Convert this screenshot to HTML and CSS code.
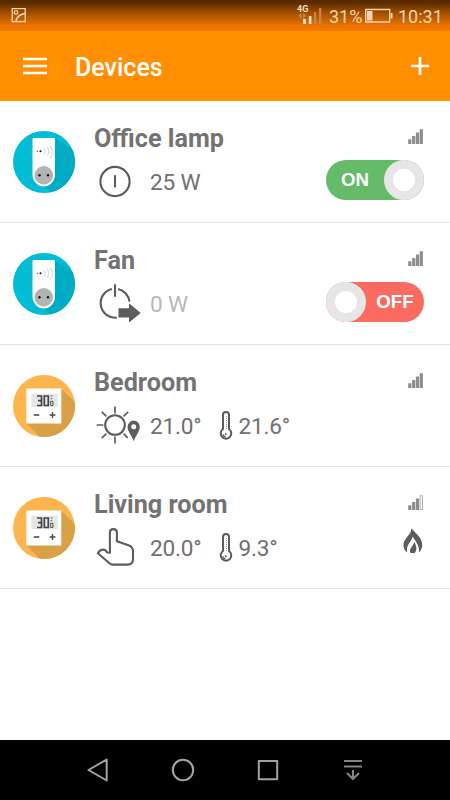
FILE: index.html
```html
<!DOCTYPE html>
<html lang="en">
<head>
<meta charset="utf-8">
<title>Devices</title>
<link rel="stylesheet" href="styles.css">
</head>
<body>
<svg class="defs" aria-hidden="true">
  <defs>
    <clipPath id="disc"><circle cx="31" cy="31" r="31"/></clipPath>
    <symbol id="plug" viewBox="0 0 62 62">
      <g clip-path="url(#disc)">
        <path fill="#00bcd4" d="M0 0h62v62H0z"/>
        <path fill="#00acc4" d="M41.5 7L62 20v42H38L28 53z"/>
        <path fill="#fff" d="M19.5 8Q19.5 7 21 7H40.5Q42 7 42 8V43.500a11.250 12 0 0 1-22.500 0z"/>
        <circle cx="30.800" cy="44.200" r="9.200" fill="#b3b3b3"/>
        <g fill="#111"><circle cx="26.500" cy="44.200" r="1.200"/><circle cx="35" cy="44.200" r="1.200"/><circle cx="24.300" cy="20.300" r=".6"/><circle cx="27.500" cy="20.300" r="1"/></g>
        <path fill="none" stroke="#d2d2d2" stroke-width="1" d="M31.500 17.500q2 3 0 6M34.500 16q3 4.500 0 9M37 14.500q4.800 7 0 13"/>
      </g>
    </symbol>
    <symbol id="thermostat" viewBox="0 0 62 62">
      <g clip-path="url(#disc)">
        <path fill="#ffb54d" d="M0 0h62v62H0z"/>
        <path fill="#d9a047" d="M48.500 14L68 33v33H31L13.500 48.500z"/>
        <path fill="#fff" d="M13.300 13.500h35v35h-35z"/>
        <path fill="#e6e6e6" d="M18.300 18.700h26.500v13.300h-26.500z"/>
        <g fill="none" stroke="#444" stroke-width="1.700">
          <path d="M24 21h4.500v9.500h-4.500M25 25.700h3.500M31.300 20.300v10.400M31 21h4.300v9.500H31M35.300 20.300v10.400"/>
          <path stroke-width=".9" d="M37.700 21h1.700M37.700 26.300h2.300v4.200h-2.300zM37.700 23.700h1.500"/>
          <path stroke-width="1.300" d="M20.700 40h5.600M36.600 40h5.800M39.500 37.100v5.800"/>
        </g>
      </g>
    </symbol>
    <symbol id="thermometer" viewBox="0 0 14 30">
      <path fill="#fff" stroke="#595b5c" stroke-width="2" d="M4 18V4a3 3 0 0 1 6 0V18a5.300 5.300 0 1 1-6 0z"/>
      <path fill="none" stroke="#999" stroke-width="1" stroke-dasharray="1 1" d="M7.500 5V18"/>
      <path fill="none" stroke="#555" stroke-width="1.300" d="M3.800 23.300q.5 2 2.700 2.500M6 22.500l1.500 1.500"/>
    </symbol>
    <symbol id="signal" viewBox="0 0 16 15">
      <path fill="#8d8d8d" d="M.2 10.300h3.200V15H.2zM4.100 7.100h3.200V15H4.100zM7.900 3.600h3.200V15H7.900zM11.700 .2h3.200v14.800h-3.200z"/>
    </symbol>
  </defs>
</svg>

<div class="statusbar">
  <svg class="sb-picture" viewBox="0 0 16 16"><g fill="none" stroke="currentColor" stroke-width="1.300"><path d="M1.200 1.700h13v13h-13z"/><circle cx="5" cy="5.500" r="1.800"/><path d="M5 14q1-6 9-7.500" stroke-width="1.700"/></g></svg>
  <div class="sb-right">
    <svg class="sb-net" viewBox="0 0 26 22"><text x="0" y="9">4G</text><path fill="#f3dcc7" d="M6 16h3v5H6zM11.800 13h2.700v8h-2.700z"/><path fill="#c8874a" d="M17 9h2.200v12H17zM22 5h2.300v16H22zM1.300 12.800l3-3v6zM9 12.800l-3-3v6z"/></svg>
    <span class="sb-pct">31%</span>
    <svg class="sb-bat" viewBox="0 0 29 16"><path fill="none" stroke="currentColor" stroke-width="1.400" d="M1.700 1.500h24v12.500h-24z"/><path fill="currentColor" d="M3 3h5.500v9.500H3zM26.500 5h2v5.500h-2z"/></svg>
    <span class="sb-time">10:31</span>
  </div>
</div>

<header class="appbar">
  <svg class="menu" viewBox="0 0 24 18"><path stroke="#fff" stroke-width="2.600" d="M0 2h24M0 9h24M0 16h24"/></svg>
  <h1>Devices</h1>
  <svg class="add" viewBox="0 0 18 18"><path stroke="#fff" stroke-width="2.700" d="M0 9h18M9 0v18"/></svg>
</header>

<main class="devices">
  <section class="device">
    <svg class="avatar"><use href="#plug"/></svg>
    <div class="info">
      <h2>Office lamp</h2>
      <div class="readings">
        <svg class="mode" viewBox="0 0 50 46"><g fill="none" stroke="#595b5c" stroke-width="2.100"><circle cx="21" cy="22.500" r="14.600"/><path d="M21 16.200v12.200"/></g></svg>
        <span class="value">25 W</span>
      </div>
    </div>
    <div class="side">
      <svg class="signal"><use href="#signal"/></svg>
      <div class="toggle on"><span>ON</span><i></i></div>
    </div>
  </section>

  <section class="device">
    <svg class="avatar"><use href="#plug"/></svg>
    <div class="info">
      <h2>Fan</h2>
      <div class="readings">
        <svg class="mode" viewBox="0 0 50 46"><path fill="none" stroke="#595b5c" stroke-width="2.100" d="M21 3.300V15.800M17.800 8A14.600 14.600 0 0 0 22.800 36.700M24 8A14.600 14.600 0 0 1 35.500 20.600"/><path fill="#5b5d5e" d="M24.500 27.300H35V22.300L46.700 31.900 35 41.500V36.500H24.500z"/></svg>
        <span class="value idle">0 W</span>
      </div>
    </div>
    <div class="side">
      <svg class="signal"><use href="#signal"/></svg>
      <div class="toggle off"><i></i><span>OFF</span></div>
    </div>
  </section>

  <section class="device">
    <svg class="avatar"><use href="#thermostat"/></svg>
    <div class="info">
      <h2>Bedroom</h2>
      <div class="readings">
        <svg class="mode" viewBox="0 0 50 46"><g fill="none" stroke="#5b5d5e" stroke-width="1.700"><circle cx="21" cy="22" r="9.800" stroke-width="2.100"/><path d="M21 3.500v7M21 33.500v7M2.700 22h6.600M7.800 8.800l4.600 4.600M34.200 8.800l-4.600 4.600M7.800 35.200l4.600-4.600M33.800 34.800l-4.200-4.200"/></g><path fill="#5b5d5e" fill-rule="evenodd" d="M39.700 38.300C37.500 32 33.600 28.500 33.600 23.700a6.100 6.100 0 0 1 12.200 0C45.800 28.500 41.900 32 39.700 38.300zM39.700 21.200a2.500 2.500 0 1 0 0 5 2.500 2.500 0 0 0 0-5z"/></svg>
        <span class="value">21.0°</span>
        <svg class="thermo"><use href="#thermometer"/></svg>
        <span class="value">21.6°</span>
      </div>
    </div>
    <div class="side">
      <svg class="signal"><use href="#signal"/></svg>
    </div>
  </section>

  <section class="device">
    <svg class="avatar"><use href="#thermostat"/></svg>
    <div class="info">
      <h2>Living room</h2>
      <div class="readings">
        <svg class="mode" viewBox="0 0 50 46"><path fill="none" stroke="#5b5d5e" stroke-width="2.100" stroke-linejoin="round" d="M15.900 27.800V7.700C15.900 2.900 22.900 2.900 22.900 7.700V16.300L34.500 20.200Q39 21.800 39 26V34Q39 39.600 33.500 39.600H19Q17 39.600 15.500 38.200L3.800 28.300C5.500 25.500 8.500 24.200 11 25L13.300 27.500z"/></svg>
        <span class="value">20.0°</span>
        <svg class="thermo"><use href="#thermometer"/></svg>
        <span class="value">9.3°</span>
      </div>
    </div>
    <div class="side">
      <svg class="signal" viewBox="0 0 16 15"><path fill="#8d8d8d" d="M.2 10.300h3.200V15H.2zM4.100 7.100h3.200V15H4.100zM7.900 3.600h3.200V15H7.900z"/><path fill="#fff" stroke="#999" stroke-width=".8" d="M12.200 .7h2.300v13.800h-2.300z"/></svg>
      <svg class="flame" viewBox="0 0 20 26"><path fill="#5b5d5e" d="M8.500 .3C12.500 5.500 19 9.500 19.300 16.500 19.400 20 18 22.500 16 24.500 16.800 18 13 14.500 9.800 8.500 8 14.500 2.500 17 4.300 24.500 1.500 22.500 .3 20 .5 16.500 1 10 8 7.500 8.500 .3z"/><path fill="#5b5d5e" d="M11.200 13.800C13 17 14.800 21 11.800 25H7.500C5.300 20.500 10.500 18.500 11.200 13.800z"/></svg>
    </div>
  </section>
</main>

<nav class="navbar">
  <svg viewBox="0 0 24 26"><path d="M20.700 2.500V23.500L2.500 13z"/></svg>
  <svg viewBox="0 0 24 26"><circle cx="12" cy="13" r="10.200"/></svg>
  <svg viewBox="0 0 24 26"><path d="M2.800 4h18.400v18.300H2.800z"/></svg>
  <svg class="dim" viewBox="0 0 24 26"><path d="M3 4h18M3 9.500h18M12 13v9M6 16l6 6 6-6"/></svg>
</nav>
</body>
</html>
```

FILE: styles.css
```css
* { box-sizing: border-box; }

body {
  margin: 0;
  width: 450px;
  height: 800px;
  display: flex;
  flex-direction: column;
  background: #fff;
  font-family: Roboto, "Liberation Sans", sans-serif;
  overflow: hidden;
}

svg { display: block; flex: none; }
.defs { position: absolute; width: 0; height: 0; }
h1, h2 { margin: 0; }

.statusbar {
  height: 31px;
  flex: none;
  display: flex;
  justify-content: space-between;
  padding: 0 9px 0 11px;
  color: #f3d3b5;
  background: linear-gradient(#552a00 0, #5e2e00 10%, #a85200 45%, #e57100 80%, #f57b00 100%);
}
.sb-picture { width: 16px; height: 16px; margin-top: 7px; }
.sb-right { display: flex; font-size: 18px; line-height: 20px; }
.sb-net { width: 26px; height: 22px; margin: 3px 6px 0 0; }
.sb-net text { font-size: 9px; font-weight: 700; fill: #f3dcc7; }
.sb-pct { width: 33px; margin-top: 7px; }
.sb-bat { width: 29px; height: 16px; margin: 8px 5px 0 2px; }
.sb-time { width: 43px; margin-top: 7px; }

.appbar {
  height: 70px;
  flex: none;
  display: flex;
  align-items: center;
  padding: 0 21px 0 23px;
  background: #ff8f00;
  color: #fff;
}
.menu { width: 24px; height: 18px; }
.appbar h1 {
  flex: 1;
  margin: 4px 0 0 28px;
  font-size: 25px;
  line-height: 30px;
  font-weight: 500;
}
.add { width: 18px; height: 18px; }

.devices { flex: 1; }
.device {
  height: 122px;
  display: flex;
  padding: 0 26px 0 13px;
  border-bottom: 1px solid #e2e2e2;
}
.avatar { width: 62px; height: 62px; margin: 30px 19px 0 0; }
.info { flex: 1; padding-top: 22px; color: #737373; }
.info h2 { font-size: 25.2px; line-height: 31px; font-weight: 700; }
.readings { height: 46px; margin-top: 5px; display: flex; align-items: center; }
.mode { width: 50px; height: 46px; margin-right: 6px; }
.value { padding-top: 1px; font-size: 22.6px; line-height: 27px; letter-spacing: -.2px; color: #707070; white-space: nowrap; }
.value.idle { color: #b8b8b8; }
.thermo { width: 14px; height: 30px; margin: 0 6px 0 17px; }

.side { width: 98px; padding-top: 28px; display: flex; flex-direction: column; align-items: flex-end; }
.signal { width: 16px; height: 15px; }
.toggle {
  width: 98px;
  height: 40px;
  margin-top: 16px;
  border-radius: 20px;
  display: flex;
  align-items: center;
  color: #fff;
  font: 700 18.7px/40px "Liberation Sans", sans-serif;
}
.toggle span { flex: 1; text-align: center; }
.toggle i { width: 40px; height: 40px; border-radius: 50%; border: 9px solid #e6e6e6; background: #fff; }
.on { background: #66bb6a; }
.off { background: #fb6b60; }
.flame { width: 20px; height: 26px; margin: 18px 1px 0 0; }

.navbar {
  height: 60px;
  flex: none;
  display: flex;
  align-items: center;
  padding-left: 86px;
  gap: 61px;
  background: #000;
}
.navbar svg { width: 24px; height: 26px; fill: none; stroke: #a3a3a3; stroke-width: 2; stroke-linejoin: round; }
.navbar .dim { stroke: #858585; }
```
